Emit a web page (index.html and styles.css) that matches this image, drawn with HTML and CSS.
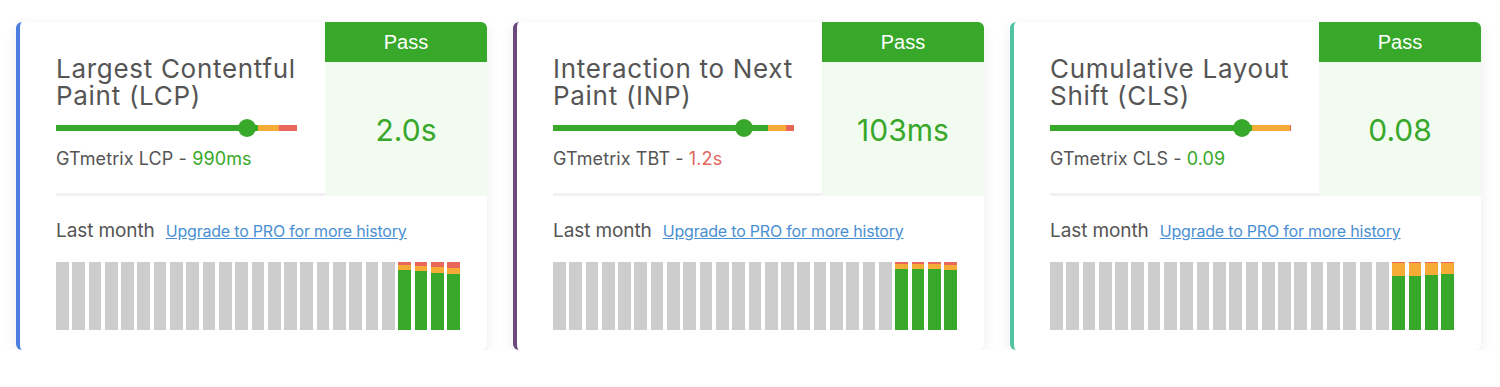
FILE: index.html
```html
<!DOCTYPE html>
<html lang="en">
<head>
    <meta charset="UTF-8">
    <title>Core Web Vitals</title>
    <link rel="stylesheet" href="styles.css">
</head>
<body>
    <div class="cards">
        <!-- LCP -->
        <div class="card card-lcp">
            <div class="card-top">
                <div class="metric">
                    <h3 class="metric-title">Largest Contentful Paint (LCP)</h3>
                    <div class="slider">
                        <span class="seg seg-good" style="width:83.8%"></span>
                        <span class="seg seg-warn" style="width:8.7%"></span>
                        <span class="seg seg-bad" style="width:7.5%"></span>
                        <span class="dot" style="left:79.3%"></span>
                    </div>
                    <p class="metric-sub">GTmetrix LCP - <span class="good">990ms</span></p>
                </div>
                <div class="grade">
                    <div class="grade-label">Pass</div>
                    <div class="grade-value">2.0s</div>
                </div>
            </div>
            <div class="card-bottom">
                <div class="history-head">
                    <span class="history-title">Last month</span>
                    <a href="javascript:;" class="history-link">Upgrade to PRO for more history</a>
                </div>
                <div class="history-bars">
                    <span class="hbar"></span><span class="hbar"></span><span class="hbar"></span><span class="hbar"></span><span class="hbar"></span>
                    <span class="hbar"></span><span class="hbar"></span><span class="hbar"></span><span class="hbar"></span><span class="hbar"></span>
                    <span class="hbar"></span><span class="hbar"></span><span class="hbar"></span><span class="hbar"></span><span class="hbar"></span>
                    <span class="hbar"></span><span class="hbar"></span><span class="hbar"></span><span class="hbar"></span><span class="hbar"></span>
                    <span class="hbar"></span>
                    <span class="hbar filled"><i class="bad" style="height:3px"></i><i class="warn" style="height:5px"></i><i class="ok"></i></span>
                    <span class="hbar filled"><i class="bad" style="height:4px"></i><i class="warn" style="height:5px"></i><i class="ok"></i></span>
                    <span class="hbar filled"><i class="bad" style="height:5px"></i><i class="warn" style="height:6px"></i><i class="ok"></i></span>
                    <span class="hbar filled"><i class="bad" style="height:6px"></i><i class="warn" style="height:6px"></i><i class="ok"></i></span>
                </div>
            </div>
        </div>

        <!-- INP -->
        <div class="card card-inp">
            <div class="card-top">
                <div class="metric">
                    <h3 class="metric-title">Interaction to Next Paint (INP)</h3>
                    <div class="slider">
                        <span class="seg seg-good" style="width:89.2%"></span>
                        <span class="seg seg-warn" style="width:7.5%"></span>
                        <span class="seg seg-bad" style="width:3.3%"></span>
                        <span class="dot" style="left:79.3%"></span>
                    </div>
                    <p class="metric-sub">GTmetrix TBT - <span class="bad-text">1.2s</span></p>
                </div>
                <div class="grade">
                    <div class="grade-label">Pass</div>
                    <div class="grade-value">103ms</div>
                </div>
            </div>
            <div class="card-bottom">
                <div class="history-head">
                    <span class="history-title">Last month</span>
                    <a href="javascript:;" class="history-link">Upgrade to PRO for more history</a>
                </div>
                <div class="history-bars">
                    <span class="hbar"></span><span class="hbar"></span><span class="hbar"></span><span class="hbar"></span><span class="hbar"></span>
                    <span class="hbar"></span><span class="hbar"></span><span class="hbar"></span><span class="hbar"></span><span class="hbar"></span>
                    <span class="hbar"></span><span class="hbar"></span><span class="hbar"></span><span class="hbar"></span><span class="hbar"></span>
                    <span class="hbar"></span><span class="hbar"></span><span class="hbar"></span><span class="hbar"></span><span class="hbar"></span>
                    <span class="hbar"></span>
                    <span class="hbar filled"><i class="bad" style="height:2px"></i><i class="warn" style="height:5px"></i><i class="ok"></i></span>
                    <span class="hbar filled"><i class="bad" style="height:2px"></i><i class="warn" style="height:5px"></i><i class="ok"></i></span>
                    <span class="hbar filled"><i class="bad" style="height:2px"></i><i class="warn" style="height:5px"></i><i class="ok"></i></span>
                    <span class="hbar filled"><i class="bad" style="height:3px"></i><i class="warn" style="height:5px"></i><i class="ok"></i></span>
                </div>
            </div>
        </div>

        <!-- CLS -->
        <div class="card card-cls">
            <div class="card-top">
                <div class="metric">
                    <h3 class="metric-title">Cumulative Layout Shift (CLS)</h3>
                    <div class="slider">
                        <span class="seg seg-good" style="width:83.8%"></span>
                        <span class="seg seg-warn" style="width:15.8%"></span>
                        <span class="seg seg-bad" style="width:0.4%"></span>
                        <span class="dot" style="left:79.7%"></span>
                    </div>
                    <p class="metric-sub">GTmetrix CLS - <span class="good">0.09</span></p>
                </div>
                <div class="grade">
                    <div class="grade-label">Pass</div>
                    <div class="grade-value">0.08</div>
                </div>
            </div>
            <div class="card-bottom">
                <div class="history-head">
                    <span class="history-title">Last month</span>
                    <a href="javascript:;" class="history-link">Upgrade to PRO for more history</a>
                </div>
                <div class="history-bars">
                    <span class="hbar"></span><span class="hbar"></span><span class="hbar"></span><span class="hbar"></span><span class="hbar"></span>
                    <span class="hbar"></span><span class="hbar"></span><span class="hbar"></span><span class="hbar"></span><span class="hbar"></span>
                    <span class="hbar"></span><span class="hbar"></span><span class="hbar"></span><span class="hbar"></span><span class="hbar"></span>
                    <span class="hbar"></span><span class="hbar"></span><span class="hbar"></span><span class="hbar"></span><span class="hbar"></span>
                    <span class="hbar"></span>
                    <span class="hbar filled"><i class="bad" style="height:1px"></i><i class="warn" style="height:13px"></i><i class="ok"></i></span>
                    <span class="hbar filled"><i class="bad" style="height:1px"></i><i class="warn" style="height:13px"></i><i class="ok"></i></span>
                    <span class="hbar filled"><i class="bad" style="height:1px"></i><i class="warn" style="height:12px"></i><i class="ok"></i></span>
                    <span class="hbar filled"><i class="bad" style="height:1px"></i><i class="warn" style="height:11px"></i><i class="ok"></i></span>
                </div>
            </div>
        </div>
    </div>
</body>
</html>
```

FILE: styles.css
```css
* {
    margin: 0;
    padding: 0;
    box-sizing: border-box;
}

body {
    background-color: #fff;
    font-family: Inter, "Liberation Sans", sans-serif;
    color: #555;
}

.cards {
    display: flex;
    gap: 26px;
    padding: 22px 0 0 16px;
}

/* 单个指标卡片 */
.card {
    width: 471px;
    height: 328px;
    background-color: #fff;
    border-radius: 6px;
    border-left: 4px solid #4a7fe0;
    box-shadow: 0 4px 14px rgba(0, 0, 0, 0.08);
    display: flex;
    flex-direction: column;
    overflow: hidden;
}

.card-inp {
    border-left-color: #6a4a7c;
}

.card-cls {
    border-left-color: #52c3a0;
}

.card-top {
    display: flex;
    height: 174px;
}

.metric {
    flex: 1;
    margin-left: 36px;
    padding-top: 33px;
    border-bottom: 3px solid #f1f1f1;
}

.metric-title {
    font-size: 26px;
    font-weight: 400;
    line-height: 27px;
    letter-spacing: 0.7px;
    color: #555;
    width: 264px;
}

.slider {
    position: relative;
    display: flex;
    width: 241px;
    height: 6px;
    margin-top: 16px;
}

.seg {
    height: 6px;
}

.seg-good {
    background-color: #38a82a;
}

.seg-warn {
    background-color: #f5ab36;
}

.seg-bad {
    background-color: #e9665b;
}

.dot {
    position: absolute;
    top: -6px;
    width: 18px;
    height: 18px;
    margin-left: -9px;
    border-radius: 50%;
    background-color: #38a82a;
}

.metric-sub {
    margin-top: 17px;
    font-size: 18px;
    letter-spacing: 0.1px;
    color: #555;
}

.good {
    color: #38a82a;
}

.bad-text {
    color: #e0665c;
}

/* Pass 区域 */
.grade {
    width: 162px;
    display: flex;
    flex-direction: column;
}

.grade-label {
    height: 40px;
    line-height: 40px;
    background-color: #38a82a;
    color: #fff;
    text-align: center;
    font-family: "Liberation Sans", Arial, sans-serif;
    font-size: 20px;
}

.grade-value {
    flex: 1;
    background-color: #f2fbf0;
    color: #38a82a;
    font-size: 30px;
    display: flex;
    align-items: center;
    justify-content: center;
    padding-top: 2px;
}

/* 历史记录 */
.card-bottom {
    flex: 1;
    padding: 23px 27px 20px 36px;
}

.history-head {
    display: flex;
    align-items: baseline;
    gap: 11px;
}

.history-title {
    font-size: 19px;
    letter-spacing: -0.1px;
    color: #555;
}

.history-link {
    font-size: 16px;
    letter-spacing: -0.2px;
    color: #4a8fd2;
    text-decoration: underline;
}

.history-bars {
    display: flex;
    gap: 3.6px;
    height: 68px;
    margin-top: 20px;
}

.hbar {
    flex: 1;
    background-color: #cdcdcd;
    display: flex;
    flex-direction: column;
}

.hbar.filled {
    background-color: transparent;
}

.hbar i {
    display: block;
}

.hbar .bad {
    background-color: #e9665b;
}

.hbar .warn {
    background-color: #f5ab36;
}

.hbar .ok {
    flex: 1;
    background-color: #38a82a;
}
```
